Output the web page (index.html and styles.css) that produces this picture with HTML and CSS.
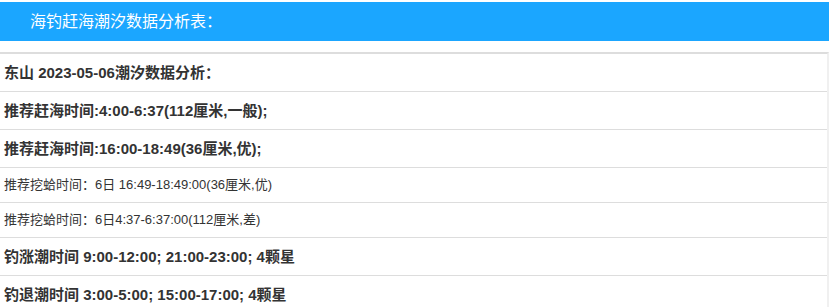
FILE: index.html
```html
<!DOCTYPE html>
<html lang="zh-CN">
<head>
<meta charset="utf-8">
<title>海钓赶海潮汐数据分析表</title>
<link rel="stylesheet" href="styles.css">
</head>
<body>
<div class="page">
  <div class="header">海钓赶海潮汐数据分析表：</div>
  <div class="table">
    <div class="row big">东山 2023-05-06潮汐数据分析：</div>
    <div class="row big">推荐赶海时间:4:00-6:37(112厘米,一般);</div>
    <div class="row big">推荐赶海时间:16:00-18:49(36厘米,优);</div>
    <div class="row small">推荐挖蛤时间：6日 16:49-18:49:00(36厘米,优)</div>
    <div class="row small">推荐挖蛤时间：6日4:37-6:37:00(112厘米,差)</div>
    <div class="row big">钓涨潮时间 9:00-12:00; 21:00-23:00; 4颗星</div>
    <div class="row big">钓退潮时间 3:00-5:00; 15:00-17:00; 4颗星</div>
  </div>
</div>
</body>
</html>
```

FILE: styles.css
```css
html, body {
  margin: 0;
  padding: 0;
  background: #fff;
}
body {
  font-family: "Liberation Sans", "Noto Sans CJK SC", Arial, sans-serif;
  color: #333;
}
.page {
  padding-top: 2px;
}
.header {
  background: #1ba6ff;
  color: #fff;
  font-size: 16px;
  line-height: 39px;
  height: 39px;
  padding-left: 30px;
}
.table {
  margin-top: 11px;
  border-top: 2px solid #dddddd;
  border-right: 2px solid #f0f0f0;
}
.row {
  padding: 0 4px;
  border-bottom: 1px solid #dddddd;
  white-space: nowrap;
}
.row.big {
  font-size: 15px;
  font-weight: bold;
  line-height: 37px;
}
.row.small {
  font-size: 13px;
  line-height: 34px;
}
```
